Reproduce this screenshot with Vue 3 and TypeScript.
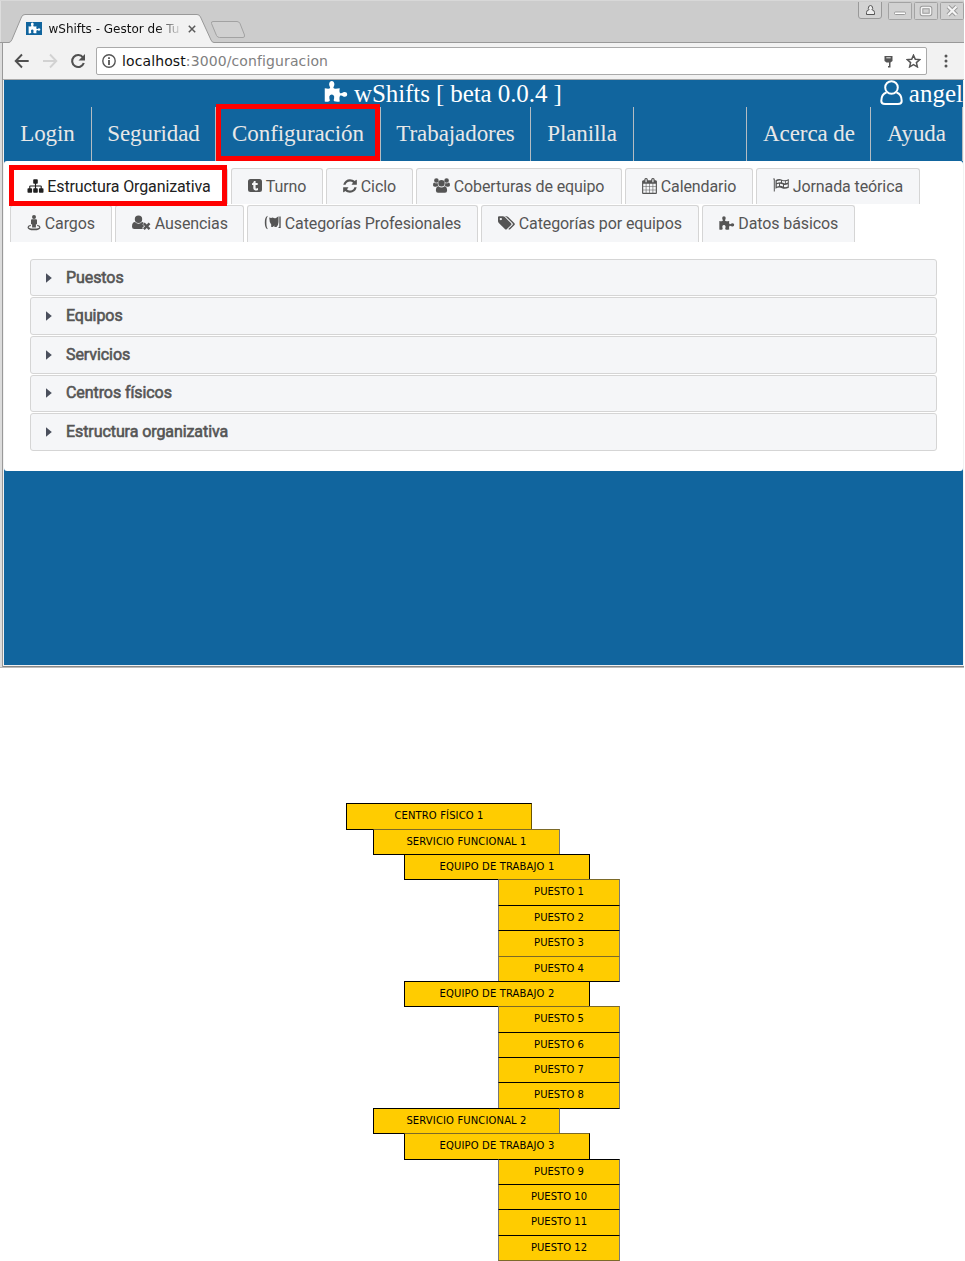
<script setup lang="ts">
interface Tab {
  label: string
  icon: string
  width: number
}
interface Node {
  label: string
  kind: string
  soft?: boolean
}

const puzzle =
  'M1 8.3Q6 9.400 6.400 7.800 6.400 7 5.700 6 4.800 3.800 6 2 8 .2 10 2 11.200 3.800 10.300 6 9.600 7 9.600 7.800 10 9.400 16 8.300 15.200 12.500 16.500 13.200 18 13.500 19.500 12.300 21.500 11.600 23 12.800 24 14.300 23 16 21.500 17.200 19.500 16.400 18 15.200 16.500 15.600 15.200 17 16 21.500 13 22 10.500 21.300 9.300 20.500 10.300 18.700 11 16 9.500 15 8 14.200 6.500 15 5 16 5.700 18.700 6.700 20.500 5.500 21.300 3 22.300 1 21.500z'

const icons: Record<string, { box: string; w: number; d: string }> = {
  sitemap: {
    box: '0 0 1792 1792',
    w: 17,
    d: 'M1792 1248v320q0 40-28 68t-68 28h-320q-40 0-68-28t-28-68v-320q0-40 28-68t68-28h96v-192h-512v192h96q40 0 68 28t28 68v320q0 40-28 68t-68 28h-320q-40 0-68-28t-28-68v-320q0-40 28-68t68-28h96v-192h-512v192h96q40 0 68 28t28 68v320q0 40-28 68t-68 28h-320q-40 0-68-28t-28-68v-320q0-40 28-68t68-28h96v-192q0-52 38-90t90-38h512v-192h-96q-40 0-68-28t-28-68v-320q0-40 28-68t68-28h320q40 0 68 28t28 68v320q0 40-28 68t-68 28h-96v192h512q52 0 90 38t38 90v192h96q40 0 68 28t28 68z',
  },
  turno: {
    box: '0 0 14 16',
    w: 14,
    d: 'M2.500 1h9a2.500 2.500 0 0 1 2.500 2.500v8a2.500 2.500 0 0 1-2.500 2.500h-9A2.500 2.500 0 0 1 0 11.500v-8A2.500 2.500 0 0 1 2.500 1zM5.900 3.100C5.800 4.200 5.200 5 4 5.400v1.600h1.300v3.100c0 1.600 1 2.400 2.600 2.400.8 0 1.500-.2 2.100-.6v-1.800c-.5.3-1 .5-1.500.5-.7 0-.9-.3-.9-.9V7h2.100V5.100H7.600v-2z',
  },
  ciclo: {
    box: '128 0 1536 1792',
    w: 14,
    d: 'M1639 1056q0 5-1 7-64 268-268 434.5t-478 166.5q-146 0-282.500-55t-243.500-157l-129 129q-19 19-45 19t-45-19-19-45v-448q0-26 19-45t45-19h448q26 0 45 19t19 45-19 45l-137 137q71 66 161 102t187 36q134 0 250-65t186-179q11-17 53-117 8-23 30-23h192q13 0 22.500 9.500t9.500 22.500zm25-800v448q0 26-19 45t-45 19h-448q-26 0-45-19t-19-45 19-45l138-138q-148-137-349-137-134 0-250 65t-186 179q-11 17-53 117-8 23-30 23h-199q-13 0-22.500-9.500t-9.500-22.500v-7q65-268 270-434.500t480-166.500q146 0 284 55.500t245 156.500l130-129q19-19 45-19t45 19 19 45z',
  },
  users: {
    box: '0 0 17 16',
    w: 17,
    d: 'M8.500 2a3.200 3.200 0 1 1 0 6.400 3.200 3.200 0 0 1 0-6.400zM3.400 .2a2.300 2.300 0 1 1 0 4.600 2.300 2.300 0 0 1 0-4.600zM13.600 .2a2.300 2.300 0 1 1 0 4.600 2.300 2.300 0 0 1 0-4.600zM1.200 4.400q1 .9 2.200.9.600 0 1.300-.3-.1 1.500.7 2.700Q4 7.800 3.300 8.700H1.700Q0 8.700 0 7.300 0 4.400 1.200 4.400zM15.800 4.400q-1 .9-2.200.9-.6 0-1.300-.3.100 1.500-.7 2.700 1.400.1 2.100 1h1.600q1.700 0 1.700-1.400 0-2.900-1.200-2.900zM5.500 8.300q1.400 1.200 3 1.200t3-1.200q2.600.1 2.600 4.300 0 2.200-2.100 2.200H5q-2.100 0-2.100-2.200 0-4.200 2.600-4.300z',
  },
  calendar: {
    box: '64 0 1664 1792',
    w: 15,
    d: 'M192 1664h288v-288h-288v288zm352 0h320v-288h-320v288zm-352-352h288v-320h-288v320zm352 0h320v-320h-320v320zm-352-384h288v-288h-288v288zm736 736h320v-288h-320v288zm-384-736h320v-288h-320v288zm768 736h288v-288h-288v288zm-384-352h320v-320h-320v320zm-352-864v-288q0-13-9.500-22.500t-22.500-9.500h-64q-13 0-22.500 9.500t-9.500 22.500v288q0 13 9.500 22.500t22.500 9.500h64q13 0 22.500-9.500t9.500-22.500zm736 864h288v-320h-288v320zm-384-384h320v-288h-320v288zm384 0h288v-288h-288v288zm32-480v-288q0-13-9.500-22.500t-22.500-9.500h-64q-13 0-22.500 9.500t-9.500 22.500v288q0 13 9.500 22.500t22.500 9.500h64q13 0 22.500-9.500t9.500-22.500zm384-64v1280q0 52-38 90t-90 38h-1408q-52 0-90-38t-38-90v-1280q0-52 38-90t90-38h128v-96q0-66 47-113t113-47h64q66 0 113 47t47 113v96h384v-96q0-66 47-113t113-47h64q66 0 113 47t47 113v96h128q52 0 90 38t38 90z',
  },
  flag: {
    box: '0 0 16 16',
    w: 16,
    d: 'M0 .6h1.800V13.500H.8V2zM2.500 2.200q3.500-2 6.500-.4 3 1.400 6.800-.7v8.600q-3.800 2-6.800.5-3-1.500-6.500.5zM3.800 3.200v1.900q2.200-1 4.200-.8V2.500q-2-.4-4.200.7zM9 4.600q1.600.8 3 .8V3.300q-1.500 0-3-.6zM12.800 3.300v2l2-.7V2.700zM3.800 6.300v2.500q1.200-.6 2.200-.8V5.800zM7 5.700V7.800q2 .2 3 .8V6.500Q8.500 5.700 7 5.700zM11 6.900v2.200q2 .3 3.800-.6V6.300q-2 .8-3.800.6z',
  },
  cargo: {
    box: '0 0 14 16',
    w: 14,
    d: 'M7 0a2 2 0 1 1 0 4A2 2 0 0 1 7 0zM5 4.200h4q1 0 1 1v4H8.900v3.300H5.100V9.200H4v-4q0-1 1-1zM3.700 9.800l.2 1.200q-2.200.5-2.200 1.200Q1.700 13.500 7 13.500t5.300-1.300q0-.7-2.200-1.200l.2-1.200q3.200.8 3.200 2.400Q13.500 15.300 7 15.300T.5 12.200q0-1.600 3.200-2.400z',
  },
  userx: {
    box: '0 0 19 16',
    w: 19,
    d: 'M6.500 .5a3.700 3.700 0 1 1 0 7.400 3.700 3.700 0 0 1 0-7.400zM3 7.100q1.500 1.700 3.500 1.700T10 7.100q1.100 0 1.800.9l-1.400 1.300 1.700 1.700-2 2 1 1H2.300Q0 14 0 11.700 0 7.100 3 7.100zM12.700 7.500l2 2 2-2 1.700 1.700-2 2 2 2-1.700 1.700-2-2-2 2-1.700-1.700 2-2-2-2z',
  },
  categoria: {
    box: '0 0 17 16',
    w: 17,
    d: 'M3.500 .7v1Q2.400 3 2.400 7.500t1.100 5.800v1Q.8 13 .8 7.500T3.500 .7zM5.200 2.500q2 .8 3.500 0 1.700 1.200 3.300.5L14.500 1.300v5.600q0 3-2 5.100h-2.200l.2-1.500L8.700 12H7.200V9.500Q5.300 7.400 5.200 2.500zM15.300 1.500H16.700v11.500h-2.200V12h.8z',
  },
  tags: {
    box: '0 0 1920 1792',
    w: 17,
    d: 'M448 448q0-53-37.500-90.500t-90.500-37.500-90.500 37.500-37.500 90.500 37.500 90.500 90.500 37.500 90.500-37.500 37.500-90.500zm1067 576q0 53-37 90l-491 492q-39 37-91 37-53 0-90-37l-715-716q-38-37-64.500-101t-26.500-117v-416q0-52 38-90t90-38h416q53 0 117 26.500t102 64.500l715 714q37 39 37 91zM1899 1024q0 53-37 90l-491 492q-39 37-91 37-36 0-59-14t-53-45l470-470q37-37 37-90 0-52-37-91l-715-714q-38-38-102-64.500t-117-26.500h224q53 0 117 26.500t102 64.500l715 714q37 39 37 91z',
  },
  puzzle: { box: '0.500 0 23.500 23', w: 15.5, d: puzzle },
}

const mainNav = [
  { label: 'Login', width: 88 },
  { label: 'Seguridad', width: 124 },
  { label: 'Configuración', width: 165, marked: true },
  { label: 'Trabajadores', width: 150 },
  { label: 'Planilla', width: 103 },
]
const sideNav = [
  { label: 'Acerca de', width: 124 },
  { label: 'Ayuda', width: 92 },
]

const rowOne: Tab[] = [
  { label: 'Estructura Organizativa', icon: 'sitemap', width: 218 },
  { label: 'Turno', icon: 'turno', width: 92 },
  { label: 'Ciclo', icon: 'ciclo', width: 87 },
  { label: 'Coberturas de equipo', icon: 'users', width: 206 },
  { label: 'Calendario', icon: 'calendar', width: 128 },
  { label: 'Jornada teórica', icon: 'flag', width: 164 },
]
const rowTwo: Tab[] = [
  { label: 'Cargos', icon: 'cargo', width: 102 },
  { label: 'Ausencias', icon: 'userx', width: 129 },
  { label: 'Categorías Profesionales', icon: 'categoria', width: 231 },
  { label: 'Categorías por equipos', icon: 'tags', width: 218 },
  { label: 'Datos básicos', icon: 'puzzle', width: 153 },
]
const tabRows = [rowOne, rowTwo]

const sections = ['Puestos', 'Equipos', 'Servicios', 'Centros físicos', 'Estructura organizativa']

const puestos = (from: number, soft: number[]): Node[] =>
  [0, 1, 2, 3].map((i) => ({ label: `PUESTO ${from + i}`, kind: 'puesto', soft: soft.includes(i) }))

const tree: Node[] = [
  { label: 'CENTRO FÍSICO 1', kind: 'centro' },
  { label: 'SERVICIO FUNCIONAL 1', kind: 'servicio', soft: true },
  { label: 'EQUIPO DE TRABAJO 1', kind: 'equipo' },
  ...puestos(1, [0, 3]),
  { label: 'EQUIPO DE TRABAJO 2', kind: 'equipo' },
  ...puestos(5, [0]),
  { label: 'SERVICIO FUNCIONAL 2', kind: 'servicio' },
  { label: 'EQUIPO DE TRABAJO 3', kind: 'equipo', soft: true },
  ...puestos(9, []),
]
</script>

<template>
  <main class="page">
    <section class="window">
      <header class="titlebar">
        <svg class="tab-shape" width="250" height="43" viewBox="0 0 250 43">
          <path d="M0 42.500H9Q11 42 12 39.500L21.500 17Q22.500 14.500 25 14.500H197Q199.500 14.500 200.500 17L211 40Q212 42.500 214 42.500H250V43H0z" fill="#f2f2f2" />
          <path d="M0 42.500H9Q11 42 12 39.500L21.500 17Q22.500 14.500 25 14.500H197Q199.500 14.500 200.500 17L211 40Q212 42.500 214 42.500H250" fill="none" stroke="#999" />
          <path d="M213 21.500H237Q239 21.500 240 23.500L244.500 35Q245 37.500 243 37.500H219.500Q217.500 37.500 216.500 35.500L211.500 23.500Q211 21.500 213 21.500z" fill="#d0d0d0" stroke="#a2a2a2" />
        </svg>
        <div class="tab-body">
          <span class="favicon"><svg width="13" height="12" :viewBox="icons.puzzle.box"><path :d="puzzle" fill="#fff" /></svg></span>
          <span class="tab-title">wShifts - Gestor de Tu</span>
          <svg class="tab-close" width="8" height="8" viewBox="0 0 8 8"><path d="M.8.8l6.400 6.400M7.200.8L.8 7.200" stroke="#5a5a5a" stroke-width="1.500" /></svg>
        </div>
        <svg class="controls" width="107" height="22" viewBox="858 0 107 22">
          <path d="M858.500 2V16Q858.500 18.500 861 18.500H879Q881.500 18.500 881.500 16V2" fill="#d3d3d3" stroke="#999" />
          <path d="M868.300 8.500q0-3 2.200-3t2.200 3l-.8 1.200q2.600.3 2.600 2.800v2h-8v-2q0-2.500 2.600-2.800z" fill="#eee" stroke="#555" />
          <g fill="#d1d1d1" stroke="#a3a3a3">
            <rect x="888.500" y="2.500" width="23" height="17" rx="1" />
            <rect x="914.500" y="2.500" width="23" height="17" rx="1" />
            <rect x="940.500" y="2.500" width="23" height="17" rx="1" />
          </g>
          <rect x="894.500" y="12" width="11" height="2.500" rx="1" fill="#fff" stroke="#999" />
          <rect x="921.500" y="7.500" width="9" height="7" rx="1" fill="none" stroke="#999" stroke-width="3.600" />
          <rect x="921.500" y="7.500" width="9" height="7" rx="1" fill="none" stroke="#f5f5f5" stroke-width="1.600" />
          <path d="M948 6.500l8.500 8.500M956.500 6.500L948 15" stroke="#999" stroke-width="4" />
          <path d="M948 6.500l8.500 8.500M956.500 6.500L948 15" stroke="#f5f5f5" stroke-width="2.200" />
        </svg>
      </header>

      <div class="toolbar">
        <svg class="nav-icons" width="92" height="36" viewBox="4 43.5 92 36">
          <path d="M28.700 61.500H16.500M22 55l-6.300 6.500L22 68" fill="none" stroke="#505050" stroke-width="1.900" />
          <path d="M43 61.500h12.500M50 55l6.300 6.500L50 68" fill="none" stroke="#d2d2d2" stroke-width="1.900" />
          <path d="M83 58a6 6 0 1 0 .8 5.500" fill="none" stroke="#505050" stroke-width="2.100" />
          <path d="M85 54.500v6.500h-6.500z" fill="#505050" />
        </svg>
        <div class="address">
          <svg class="info" width="14" height="14" viewBox="0 0 14 14">
            <circle cx="7" cy="7" r="6.200" fill="none" stroke="#555" stroke-width="1.400" />
            <path d="M7 3.200v1.700M7 6v5" stroke="#555" stroke-width="1.800" />
          </svg>
          <span class="url"><b>localhost</b>:3000/configuracion</span>
          <svg class="key" width="9" height="13" viewBox="0 0 9 13">
            <path d="M.5 1h8v5L6.500 7.500V12.500H4V11h1V7.500H2.500L.5 6z" fill="#555" />
            <path d="M2.300 2.800h4.400" stroke="#eee" />
          </svg>
          <svg class="star" width="15" height="14" viewBox="0 0 15 14">
            <path d="M7.500 1.200l1.800 4 4.500.4-3.400 3 1 4.300-3.900-2.300-3.900 2.300 1-4.300-3.400-3 4.500-.4z" fill="none" stroke="#555" stroke-width="1.500" />
          </svg>
        </div>
        <svg class="dots" width="4" height="14" viewBox="0 0 4 14"><g fill="#555"><circle cx="2" cy="2" r="1.500" /><circle cx="2" cy="7" r="1.500" /><circle cx="2" cy="12" r="1.500" /></g></svg>
      </div>

      <div class="app">
        <div class="brand">
          <svg class="brand-icon" width="24" height="23" :viewBox="icons.puzzle.box"><path :d="puzzle" fill="#fff" /></svg>
          <span class="brand-name">wShifts [ beta 0.0.4 ]</span>
          <svg class="user-icon" width="23" height="26" viewBox="0 0 23 26">
            <path d="M6.500 12.500C1.500 14 1.300 18 1.300 21Q1.300 24 5 24H18Q21.700 24 21.700 21C21.700 18 21.500 14 16.500 12.500" fill="none" stroke="#fff" stroke-width="2" />
            <circle cx="11.500" cy="7.500" r="6.300" fill="none" stroke="#fff" stroke-width="2" />
          </svg>
          <span class="user-name">angel</span>
        </div>
        <nav class="menu">
          <a v-for="n in mainNav" :key="n.label" :class="{ marked: n.marked }" :style="{ width: n.width + 'px' }">{{ n.label }}</a>
          <a v-for="(n, i) in sideNav" :key="n.label" :class="{ first: i === 0 }" :style="{ width: n.width + 'px' }">{{ n.label }}</a>
        </nav>
        <div class="panel">
          <div v-for="(row, r) in tabRows" :key="r" class="tabs" :class="'tabs-' + r">
            <div
              v-for="(t, i) in row"
              :key="t.label"
              class="tab"
              :class="{ active: r === 0 && i === 0 }"
              :style="{ width: t.width + 'px' }"
            >
              <svg :width="icons[t.icon].w" height="16" :viewBox="icons[t.icon].box">
                <path :d="icons[t.icon].d" fill="currentColor" fill-rule="evenodd" />
              </svg>
              <span>{{ t.label }}</span>
            </div>
          </div>
          <div class="accordion">
            <div v-for="s in sections" :key="s" class="section">
              <svg width="6" height="10" viewBox="0 0 6 10"><path d="M0 .2L5.800 5 0 9.800z" fill="#4a4f5c" /></svg>
              <span>{{ s }}</span>
            </div>
          </div>
        </div>
      </div>
    </section>

    <section class="tree">
      <div v-for="n in tree" :key="n.label" class="node" :class="[n.kind, { soft: n.soft }]">{{ n.label }}</div>
    </section>
  </main>
</template>

<style>
body {
  background: #fff;
}
</style>

<style scoped>
*,
*::after {
  box-sizing: border-box;
}
.page {
  width: 965px;
  height: 1261px;
  overflow: hidden;
  background: #fff;
}
svg {
  display: block;
  flex: none;
}
.window {
  height: 668px;
  width: 964px;
  background: #f2f2f2;
  border-bottom: 1px solid #bbb;
  box-shadow: inset 2px 0 #dcdcdc, inset 3px 0 #999, inset 0 -1px #888;
}
.titlebar {
  height: 43px;
  background: #ccc;
  border-top: 1px solid #d8d8d8;
  box-shadow: inset 0 -1px #999, inset 1px 0 #ddd;
  position: relative;
}
.tab-shape {
  position: absolute;
  left: 0;
  top: -1px;
}
.tab-body {
  position: relative;
  display: flex;
  align-items: center;
  height: 27px;
  padding: 0 0 0 26px;
  top: 14px;
}
.favicon {
  width: 16px;
  height: 13px;
  background: #11659e;
  display: flex;
  justify-content: center;
}
.tab-title {
  margin-left: 6.500px;
  width: 139px;
  white-space: nowrap;
  font: 12px/16px "DejaVu Sans", sans-serif;
  color: #111;
  -webkit-mask-image: linear-gradient(90deg, #000 108px, transparent 134px);
  mask-image: linear-gradient(90deg, #000 108px, transparent 134px);
}
.controls {
  position: absolute;
  left: 858px;
  top: -1px;
}
.toolbar {
  height: 37px;
  margin-left: 3px;
  padding-left: 1px;
  display: flex;
  align-items: flex-start;
  background: #f2f2f2;
  border-bottom: 1px solid #aaa;
}
.address {
  width: 831px;
  height: 28px;
  margin-top: 4px;
  border: 1px solid #aaa;
  border-radius: 2px;
  background: #fff;
  display: flex;
  align-items: center;
  padding-left: 5px;
}
.url {
  margin-left: 6px;
  width: 762px;
  font: 14px/18px "DejaVu Sans", sans-serif;
  letter-spacing: 0.110px;
  color: #808080;
  white-space: nowrap;
}
.url b {
  font-weight: 400;
  color: #111;
}
.star {
  margin-left: 12.500px;
}
.dots {
  margin: 11px 0 0 16.500px;
}
.app {
  margin-left: 4px;
  width: 959px;
  height: 585px;
  background: #11659e;
}
.brand {
  height: 27px;
  display: flex;
  color: #fff;
  font: 25px/27px "Liberation Serif", serif;
  white-space: nowrap;
}
.brand-icon {
  margin: 0 0 0 320px;
}
.brand-name {
  margin-left: 6px;
  width: 526.500px;
  letter-spacing: -0.090px;
}
.user-name {
  margin-left: 5.500px;
}
.menu {
  height: 54px;
  display: flex;
  font: 23px/54px "Liberation Serif", serif;
  letter-spacing: -0.080px;
  color: #e8e8e8;
}
.menu a {
  border-right: 1px solid #b5bcc2;
  text-align: center;
  white-space: nowrap;
  position: relative;
}
.menu a.first {
  margin-left: 113px;
  padding-left: 1px;
  box-shadow: -1px 0 #b5bcc2;
}
.menu a.marked::after {
  content: "";
  position: absolute;
  left: 0;
  top: -3px;
  width: 164px;
  height: 57px;
  border: 5px solid #f00;
}
.panel {
  height: 310px;
  background: #fff;
  border-radius: 3px;
  padding-top: 7px;
}
.tabs {
  display: flex;
  height: 37px;
  gap: 3px;
  padding-left: 6px;
  font: 16px/20px Roboto, sans-serif;
  letter-spacing: -0.110px;
  color: #555;
}
.tab {
  height: 36px;
  flex: none;
  display: flex;
  align-items: center;
  gap: 3.800px;
  padding-left: 16px;
  background: #f5f6f8;
  border: 1px solid #d5d5d5;
  border-bottom: 0;
  border-radius: 3px 3px 0 0;
  white-space: nowrap;
}
.tab svg {
  margin-top: -2px;
}
.tabs-1 .tab {
  height: 37px;
}
.tab.active {
  background: #fff;
  color: #212121;
  position: relative;
  gap: 3.300px;
}
.tab.active::after {
  content: "";
  position: absolute;
  left: -2px;
  top: -4px;
  width: 218px;
  height: 41px;
  border: 5px solid #f00;
  z-index: 1;
}
.accordion {
  margin: 17px 26px 0;
  display: grid;
  gap: 1px;
  grid-template-rows: 37px 38px 38px 37px 38px;
}
.section {
  background: #f5f6f8;
  border: 1px solid #d5d5d5;
  border-radius: 3px;
  display: flex;
  align-items: center;
  padding-left: 15px;
  gap: 14px;
  font: 16px/20px Roboto, sans-serif;
  letter-spacing: -0.080px;
  color: #555;
  -webkit-text-stroke: 0.600px #555;
}
.section:nth-child(4) {
  padding-bottom: 1px;
}
.tree {
  padding-top: 135.200px;
}
.node {
  height: 26.400px;
  margin-bottom: -1px;
  border: 1px solid #000;
  background: #fc0;
  text-align: center;
  font: 10px/24.500px "DejaVu Sans", sans-serif;
  letter-spacing: 0.130px;
  color: #000;
}
.node:last-child {
  border-bottom-color: #7c6a28;
}
.soft {
  border-top-color: #7c6a28;
}
.centro {
  width: 186px;
  margin-left: 346px;
  border-right-color: #6b5500;
}
.servicio {
  width: 187px;
  margin-left: 373px;
  border-right-color: #777;
}
.equipo {
  width: 186px;
  margin-left: 404px;
}
.puesto {
  width: 122px;
  margin-left: 498px;
  border-left-color: #777;
  border-right-color: #777;
  letter-spacing: 0.030px;
}
</style>
